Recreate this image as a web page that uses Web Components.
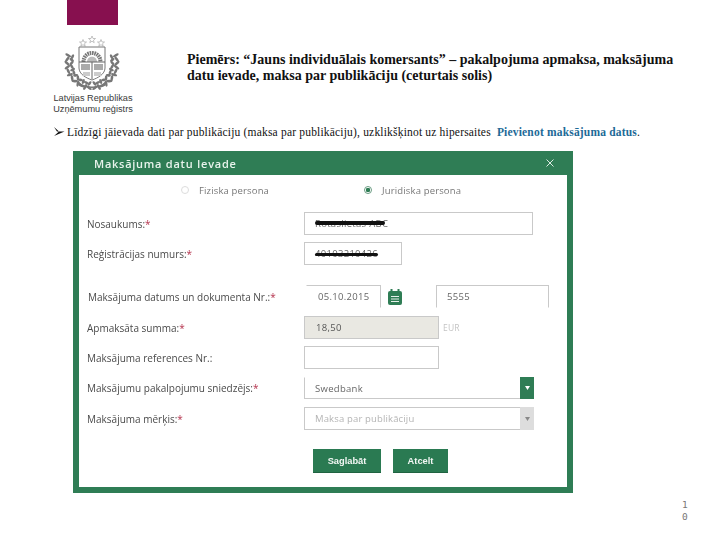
<!DOCTYPE html>
<html lang="lv">
<head>
<meta charset="utf-8">
<title>Maksājuma datu ievade</title>
<style>
  html, body { margin: 0; background: #fff; }
</style>
</head>
<body>
<slide-page>
  <ur-logo slot="logo"></ur-logo>
  <span slot="title">Piemērs: “Jauns individuālais komersants” – pakalpojuma apmaksa, maksājuma<br>datu ievade, maksa par publikāciju (ceturtais solis)</span>
  <span slot="bullet">Līdzīgi jāievada dati par publikāciju (maksa par publikāciju), uzklikšķinot uz hipersaites <a-link>Pievienot maksājuma datus</a-link>.</span>
  <pay-dialog slot="dialog" heading="Maksājuma datu Ievade">
    <radio-row></radio-row>
    <form-row label="Nosaukums:" required gap="7"><text-field width="229" struck="70" strike-top="8">Rotaslietas ABC</text-field></form-row>
    <form-row label="Reģistrācijas numurs:" required gap="20"><text-field width="98" struck="63" strike-top="9.5">40103210426</text-field></form-row>
    <form-row label="Maksājuma datums un dokumenta Nr.:" required shift gap="8">
      <text-field width="75" open noleft indent="11">05.10.2015</text-field>
      <cal-icon></cal-icon>
      <text-field width="113" open indent="10">5555</text-field>
    </form-row>
    <form-row label="Apmaksāta summa:" required gap="7"><text-field width="135" fill indent="11">18,50</text-field><field-unit>EUR</field-unit></form-row>
    <form-row label="Maksājuma references Nr.:" gap="7"><text-field width="135"></text-field></form-row>
    <form-row label="Maksājumu pakalpojumu sniedzējs:" required gap="8"><select-field accent>Swedbank</select-field></form-row>
    <form-row label="Maksājuma mērķis:" required gap="19"><select-field muted>Maksa par publikāciju</select-field></form-row>
    <div class="actions">
      <green-button width="68">Saglabāt</green-button>
      <green-button width="55">Atcelt</green-button>
    </div>
  </pay-dialog>
  <span slot="page">1<br>0</span>
</slide-page>

<script>
function shadow(el, html) {
  el.attachShadow({ mode: 'open' }).innerHTML = html;
}

const UI_FONT = `"Open Sans", "Noto Sans", sans-serif`;

class SlidePage extends HTMLElement {
  connectedCallback() {
    shadow(this, `
<style>
  :host {
    display: block;
    position: relative;
    width: 720px;
    height: 540px;
    overflow: hidden;
    background: #fff;
    font-family: "Liberation Serif", serif;
    color: #111;
  }
  .top { display: flex; height: 125px; padding-left: 52px; }
  .brand { width: 82px; flex: none; }
  .title {
    margin: 52px 0 0 53px;
    font-size: 14px;
    font-weight: bold;
    line-height: 16px;
    white-space: nowrap;
  }
  .bullet {
    display: flex;
    align-items: center;
    gap: 2px;
    height: 13px;
    margin-left: 54px;
    font-size: 11.5px;
    white-space: nowrap;
    letter-spacing: .185px;
  }
  .arrow { width: 11px; height: 9px; flex: none; }
  .dialog { margin: 13px 0 0 73px; }
  .page {
    position: absolute;
    left: 682px;
    top: 499px;
    font: 9.5px/12px "DejaVu Sans Mono", monospace;
    color: #777;
  }
</style>
<div class="top">
  <div class="brand"><slot name="logo"></slot></div>
  <div class="title"><slot name="title"></slot></div>
</div>
<div class="bullet">
  <svg class="arrow" viewBox="0 0 11 9"><path d="M0 0L5 4.5L0 9L10.5 4.5Z M0 0L10.5 4.5L3 4.5Z" fill="#111"/></svg>
  <span><slot name="bullet"></slot></span>
</div>
<div class="dialog"><slot name="dialog"></slot></div>
<div class="page"><slot name="page"></slot></div>`);
  }
}

class UrLogo extends HTMLElement {
  connectedCallback() {
    // wreath leaves on two arcs, drawn for the left side and mirrored
    let leaves = '';
    for (let i = 0; i < 12; i++) {
      const a = (-18 + i * 9.2) * Math.PI / 180;
      [[25, 3.2], [20.5, 2.6]].forEach(([r, len], ring) => {
        const x = (40 - r * Math.cos(a)).toFixed(1);
        const y = (63 + r * Math.sin(a)).toFixed(1);
        const rot = (i * 9.2 + ((i + ring) % 2 ? 45 : -45) + 72).toFixed(0);
        leaves += `<ellipse cx="${x}" cy="${y}" rx="${len}" ry="1.3" transform="rotate(${rot} ${x} ${y})"/>`;
      });
    }
    const star = (x, y) => `<path d="M${x} ${y - 3.5}L${x + 1} ${y - 1}L${x + 3.5} ${y - 1}L${x + 1.5} ${y + .7}L${x + 2.2} ${y + 3.2}L${x} ${y + 1.7}L${x - 2.2} ${y + 3.2}L${x - 1.5} ${y + .7}L${x - 3.5} ${y - 1}L${x - 1} ${y - 1}Z"/>`;
    shadow(this, `
<style>
  :host { display: block; font-family: "Liberation Sans", sans-serif; color: #3a3a3a; }
  .band { width: 51px; height: 25px; margin-left: 15px; background: #87104f; }
  svg { display: block; width: 82px; height: 67px; filter: blur(.4px); }
  .name { margin-top: 1px; text-align: center; font-size: 9.2px; line-height: 11px; white-space: nowrap; }
</style>
<div class="band"></div>
<svg viewBox="0 25 82 67">
  <g fill="#777">
    ${leaves}
    <g transform="translate(80 0) scale(-1 1)">${leaves}</g>
  </g>
  <g fill="#fff" stroke="#aaa" stroke-width=".7">${star(31, 43)}${star(40, 39.5)}${star(49, 43)}</g>
  <path d="M27 47H53V68C53 74 46 78 40 80C34 78 27 74 27 68Z" fill="#fff" stroke="#777" stroke-width="1"/>
  <path d="M31.5 62C31.5 50 48.5 50 48.5 62" fill="none" stroke="#777" stroke-width="4" stroke-dasharray="1.6 .7"/>
  <path d="M35 62C35 55 45 55 45 62Z" fill="#bbb"/>
  <path d="M27 62H53M40 62V79" stroke="#666" stroke-width="1" fill="none"/>
  <path d="M29 64H38V70H29ZM42 64H51V70H42Z" fill="#aaa"/>
  <path d="M31 72H38V76H31ZM42 72H49V76H42Z" fill="#ccc"/>
  <path d="M26 82C33 89 47 89 54 82" stroke="#777" stroke-width="1.6" fill="none"/>
</svg>
<div class="name">Latvijas Republikas<br>Uzņēmumu reģistrs</div>`);
  }
}

class ALink extends HTMLElement {
  connectedCallback() {
    shadow(this, `<style>:host { display: inline; margin-left: 3px; color: #1d6a97; font-weight: bold; }</style><slot></slot>`);
  }
}

class PayDialog extends HTMLElement {
  connectedCallback() {
    shadow(this, `
<style>
  :host {
    display: block;
    box-sizing: border-box;
    width: 500px;
    height: 342px;
    border: 6px solid #2f7d55;
    border-top: 0;
    background: #fff;
    font-family: ${UI_FONT};
    font-size: 10.5px;
    color: #555;
    filter: blur(.3px);
  }
  header {
    display: flex;
    align-items: center;
    justify-content: space-between;
    height: 24px;
    margin: 0 -6px;
    padding: 0 19px 0 21px;
    background: #2f7d55;
    color: #e8f3ec;
    font-size: 11px;
    letter-spacing: .75px;
    font-weight: 600;
  }
  .x { width: 8px; height: 8px; }
  main { padding-left: 8px; }
  ::slotted(.actions) { display: flex; gap: 12px; margin-left: 226px; }
</style>
<header>
  <span></span>
  <svg class="x" viewBox="0 0 8 8"><path d="M.5.5L7.5 7.5M7.5.5L.5 7.5" stroke="#dcebe2" stroke-width="1"/></svg>
</header>
<main><slot></slot></main>`);
    this.shadowRoot.querySelector('header span').textContent = this.getAttribute('heading');
  }
}

class RadioRow extends HTMLElement {
  connectedCallback() {
    shadow(this, `
<style>
  :host { display: flex; height: 37px; align-items: center; padding: 0 0 7px 94px; box-sizing: border-box; font-size: 9.5px; letter-spacing: .15px; color: #777; }
  .opt { display: flex; align-items: center; gap: 10px; }
  .opt + .opt { margin-left: 95px; }
  .dot { box-sizing: border-box; width: 8px; height: 8px; border-radius: 50%; border: 1px solid #ddd; }
  .on { border-color: #6a9c82; background: radial-gradient(circle, #2f7d55 0 2px, #fff 2.4px); }
</style>
<div class="opt"><span class="dot"></span>Fiziska persona</div>
<div class="opt"><span class="dot on"></span>Juridiska persona</div>`);
  }
}

class FormRow extends HTMLElement {
  connectedCallback() {
    shadow(this, `
<style>
  :host { display: flex; align-items: center; font-size: 10px; font-weight: 500; color: #4a4a4a; white-space: nowrap; }
  .label { width: 217px; flex: none; box-sizing: border-box; }
  :host([shift]) .label { padding-left: 1px; }
  .req { color: #b5344e; }
  .value { display: flex; align-items: center; font-weight: 400; }
  :host([shift]) .value { margin-left: 2px; }
</style>
<div class="label"></div>
<div class="value"><slot></slot></div>`);
    const label = this.shadowRoot.querySelector('.label');
    label.textContent = this.getAttribute('label');
    if (this.hasAttribute('required')) {
      const star = document.createElement('span');
      star.className = 'req';
      star.textContent = '*';
      label.append(star);
    }
    this.style.marginBottom = this.getAttribute('gap') + 'px';
  }
}

class TextField extends HTMLElement {
  connectedCallback() {
    const indent = this.getAttribute('indent') || 10;
    shadow(this, `
<style>
  :host {
    display: flex;
    align-items: center;
    position: relative;
    box-sizing: border-box;
    height: 23px;
    padding-left: ${indent}px;
    border: 1px solid #c9c9c9;
    font-size: 9.5px;
    letter-spacing: .3px;
    color: #666;
    background: #fff;
  }
  :host([open]) { border-bottom-color: transparent; }
  :host([noleft]) { border-left-color: transparent; }
  :host([fill]) { background: #e9e8e2; color: #555; }
  .line { display: block; position: absolute; left: 10px; background: #111; border-radius: 2px; }
</style>
<slot></slot><div class="line"></div>`);
    this.style.width = this.getAttribute('width') + 'px';
    if (this.hasAttribute('struck')) {
      const line = this.shadowRoot.querySelector('.line');
      const wide = this.getAttribute('width') > 100;
      line.style.width = this.getAttribute('struck') + 'px';
      line.style.height = (wide ? 4 : 3) + 'px';
      line.style.top = this.getAttribute('strike-top') + 'px';
    }
  }
}

class FieldUnit extends HTMLElement {
  connectedCallback() {
    shadow(this, `<style>:host { display: block; margin-left: 4px; font-size: 8.5px; letter-spacing: .2px; color: #c4c4c4; }</style><slot></slot>`);
  }
}

class CalIcon extends HTMLElement {
  connectedCallback() {
    shadow(this, `
<style>
  :host { display: block; width: 14px; height: 16px; margin: 0 34px 0 7px; }
  svg { display: block; }
</style>
<svg width="14" height="16" viewBox="0 0 14 16">
  <path d="M2 2H12A2 2 0 0 1 14 4V14A2 2 0 0 1 12 16H2A2 2 0 0 1 0 14V4A2 2 0 0 1 2 2Z" fill="#2f7d55"/>
  <path d="M3.5 0V3.5M10.5 0V3.5" stroke="#2f7d55" stroke-width="2"/>
  <path d="M3 7.5H11M3 10H11M3 12.5H11" stroke="#e6f0ea" stroke-width="1"/>
</svg>`);
  }
}

class SelectField extends HTMLElement {
  connectedCallback() {
    shadow(this, `
<style>
  :host {
    display: flex;
    box-sizing: border-box;
    width: 230px;
    height: 23px;
    border: 1px solid #c9c9c9;
    font-size: 9.5px;
    letter-spacing: .3px;
    color: #666;
    background: #fff;
  }
  :host([accent]) { border-top-color: transparent; border-right-color: transparent; height: 22px; margin-top: 1px; }
  :host([muted]) { color: #b4b4b4; letter-spacing: .15px; }
  .text { flex: 1; display: flex; align-items: center; padding-left: 10px; }
  .btn { width: 14px; margin: -1px -1px -1px 0; display: flex; align-items: center; justify-content: center; background: #ddd; }
  :host([accent]) .btn { background: #2f7d55; }
  .btn svg { width: 5px; height: 4px; }
</style>
<div class="text"><slot></slot></div>
<div class="btn"><svg viewBox="0 0 5 4"><path d="M0 0H5L2.5 4Z" fill="#fff"/></svg></div>`);
    if (this.hasAttribute('muted')) {
      this.shadowRoot.querySelector('.btn path').setAttribute('fill', '#888');
    }
  }
}

class GreenButton extends HTMLElement {
  connectedCallback() {
    shadow(this, `
<style>
  :host {
    display: flex;
    align-items: center;
    justify-content: center;
    box-sizing: border-box;
    height: 24px;
    background: #2a7a52;
    border-bottom: 1px solid #1f6341;
    color: #f2f7f4;
    font: 600 9.3px "Liberation Sans", sans-serif;
  }
</style>
<slot></slot>`);
    this.style.width = this.getAttribute('width') + 'px';
  }
}

customElements.define('slide-page', SlidePage);
customElements.define('ur-logo', UrLogo);
customElements.define('a-link', ALink);
customElements.define('pay-dialog', PayDialog);
customElements.define('radio-row', RadioRow);
customElements.define('form-row', FormRow);
customElements.define('text-field', TextField);
customElements.define('field-unit', FieldUnit);
customElements.define('cal-icon', CalIcon);
customElements.define('select-field', SelectField);
customElements.define('green-button', GreenButton);
</script>
</body>
</html>
